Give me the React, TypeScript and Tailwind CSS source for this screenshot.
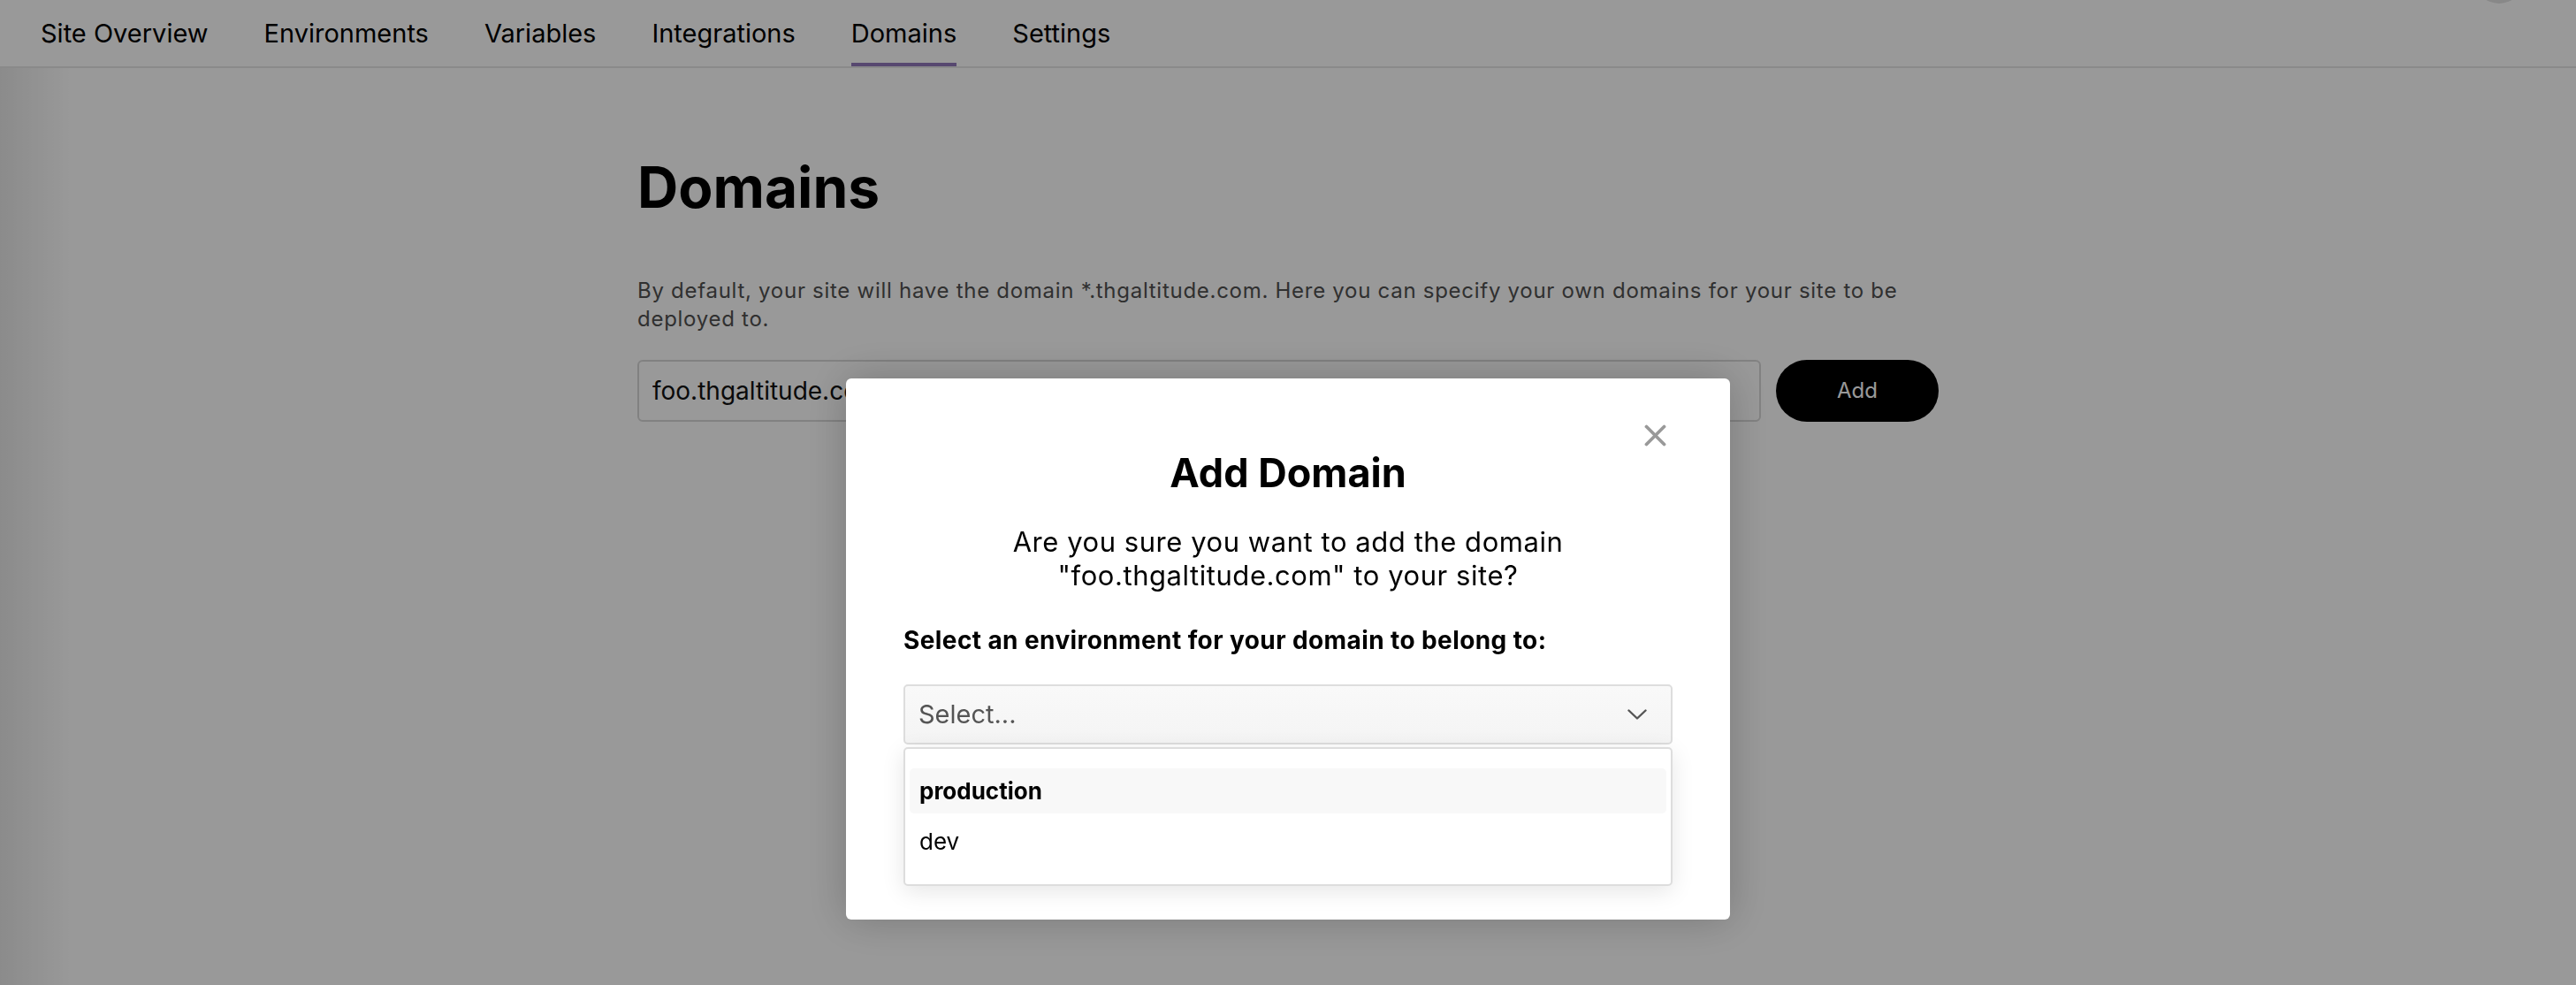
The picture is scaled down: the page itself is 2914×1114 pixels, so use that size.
const tabs = ['Site Overview', 'Environments', 'Variables', 'Integrations', 'Domains', 'Settings'];

const environments = [
  { id: 'production', label: 'production', active: true },
  { id: 'dev', label: 'dev', active: false },
];

function TopNav() {
  return (
    <nav className="relative flex h-[77px] items-stretch gap-[63px] border-b-2 border-[#e6e6e6] pl-[46px]">
      {tabs.map((tab) => (
        <a
          key={tab}
          className={`flex items-center border-b-[4px] pt-[4px] text-[29px] text-black ${
            tab === 'Domains' ? 'border-[#9178bb]' : 'border-transparent'
          }`}
        >
          {tab}
        </a>
      ))}
      <div className="absolute right-[59px] top-[-52px] h-[56px] w-[56px] rounded-full bg-[#e3e3e3]"></div>
    </nav>
  );
}

function AddDomainModal() {
  return (
    <div className="fixed inset-0 flex items-start justify-center bg-black/40 pt-[428px]">
      <div className="relative w-[1000px] rounded-[6px] bg-white px-[65px] pb-[38px] pt-[80px] shadow-[0_0_48px_rgba(0,0,0,0.22)]">
        <button className="absolute right-[72px] top-[52px] text-[#999]">
          <svg width="25" height="25" viewBox="0 0 25 25" fill="none" stroke="currentColor" strokeWidth="3.8" strokeLinecap="round">
            <path d="M2.5 2.5 22.5 22.5" />
            <path d="M22.5 2.5 2.5 22.5" />
          </svg>
        </button>
        <h2 className="text-center text-[45px] font-bold leading-[54px] text-black">Add Domain</h2>
        <p className="mt-[32px] text-center text-[31px] leading-[38px] tracking-[0.55px] text-black">
          Are you sure you want to add the domain "foo.thgaltitude.com" to your site?
        </p>
        <p className="mt-[38px] text-[28px] font-bold leading-[32px] tracking-[0.4px] text-black">
          Select an environment for your domain to belong to:
        </p>
        <div className="mt-[34px] flex h-[68px] items-center justify-between rounded-[5px] border-2 border-[#dddddd] bg-gradient-to-b from-[#f9f9f9] to-[#f4f4f4] pl-[15px] pr-[27px]">
          <span className="text-[29px] text-[#555]">Select...</span>
          <svg width="22" height="12" viewBox="0 0 22 12" fill="none" stroke="#555" strokeWidth="2.4" strokeLinecap="round" strokeLinejoin="round">
            <path d="M1.5 1.5 11 10.5 20.5 1.5" />
          </svg>
        </div>
        <div className="mt-[3px] flex flex-col gap-[6px] rounded-[5px] border-2 border-[#dddddd] bg-white px-[5px] pb-[23px] pt-[22px] shadow-[0_6px_26px_rgba(0,0,0,0.1)]">
          {environments.map((env) => (
            <div
              key={env.id}
              className={`flex h-[51px] items-center rounded-[5px] pl-[11px] text-[26px] text-black ${
                env.active ? 'bg-[#f8f8f8] font-bold' : ''
              }`}
            >
              {env.label}
            </div>
          ))}
        </div>
      </div>
    </div>
  );
}

export default function App() {
  return (
    <div className="relative h-[1114px] overflow-hidden bg-white font-['Inter',sans-serif]">
      <TopNav />
      <div className="pointer-events-none absolute bottom-0 left-0 top-[77px] w-[80px] bg-gradient-to-r from-black/[0.09] to-transparent"></div>
      <main className="mx-auto w-[1472px] pt-[96px]">
        <h1 className="text-[64px] font-bold leading-[77px] text-black">Domains</h1>
        <p className="mt-[63px] text-[24px] leading-[32px] tracking-[0.72px] text-[#505050]">
          By default, your site will have the domain *.thgaltitude.com. Here you can specify your own domains for your site to be deployed to.
        </p>
        <div className="mt-[30px] flex gap-[17px]">
          <input
            className="h-[70px] flex-1 rounded-[6px] border-2 border-[#d8d8d8] bg-white px-[15px] text-[28px] text-[#111] outline-none"
            defaultValue="foo.thgaltitude.com"
          />
          <button className="h-[70px] w-[184px] rounded-full bg-black text-[24px] text-white">Add</button>
        </div>
      </main>
      <AddDomainModal />
    </div>
  );
}
